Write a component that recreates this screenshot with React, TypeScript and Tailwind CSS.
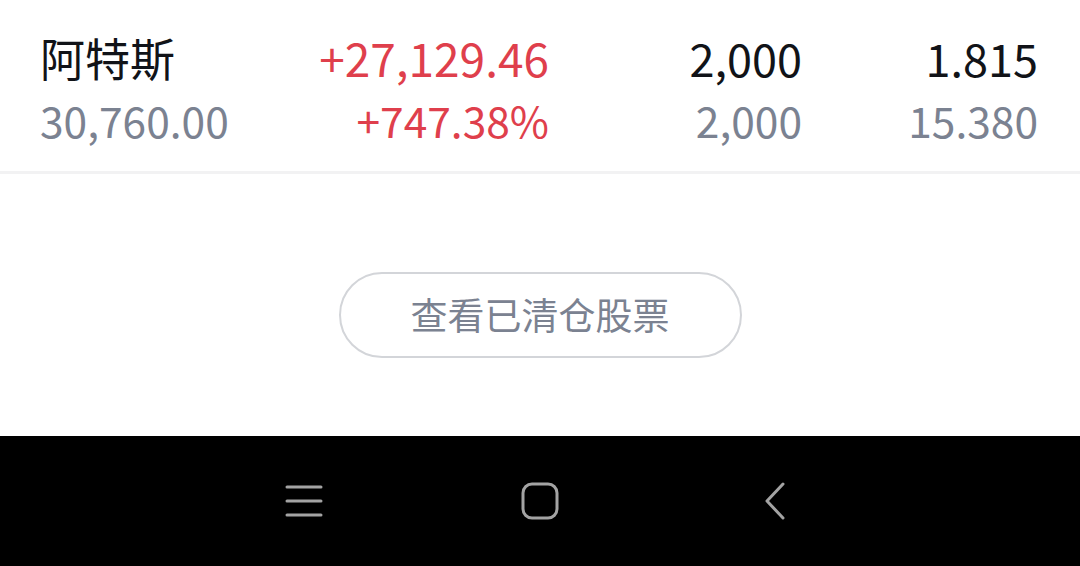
import React from 'react';

const font = { fontFamily: '"Noto Sans CJK SC", "Noto Sans", sans-serif' };

const NavBar: React.FC = () => (
  <div className="grid h-[130px] grid-cols-[236px_236px_236px] items-center justify-center justify-items-center bg-black">
    <svg width="40" height="34" viewBox="0 0 40 34" fill="none" stroke="#a3a3a3" strokeWidth="3" strokeLinecap="round">
      <path d="M3 3h34M3 17h34M3 31h34" />
    </svg>
    <svg width="40" height="40" viewBox="0 0 40 40" fill="none" stroke="#a3a3a3" strokeWidth="3">
      <rect x="3" y="3" width="34" height="34" rx="9" />
    </svg>
    <svg width="26" height="40" viewBox="0 0 26 40" fill="none" stroke="#a3a3a3" strokeWidth="3" strokeLinecap="round" strokeLinejoin="round">
      <path d="M20 3L4 20l16 17" />
    </svg>
  </div>
);

export default function App() {
  return (
    <div className="flex h-[566px] w-[1080px] flex-col bg-white" style={font}>
      <div className="grid grid-cols-[1fr_250px_253px_236px] items-baseline pl-[40px] pr-[42px] pt-[26px] pb-[20px] leading-[62px] text-[#111318]">
        <div className="text-[45px]">阿特斯</div>
        <div className="text-right text-[46px] text-[#df3f4c]">+27,129.46</div>
        <div className="text-right text-[45px]">2,000</div>
        <div className="text-right text-[45px]">1.815</div>
        <div className="text-[42.5px] text-[#7b8291]">30,760.00</div>
        <div className="text-right text-[42.5px] text-[#df3f4c]">+747.38%</div>
        <div className="text-right text-[42.5px] text-[#7b8291]">2,000</div>
        <div className="text-right text-[42.5px] text-[#7b8291]">15.380</div>
      </div>
      <div className="h-[3px] bg-[#f2f2f3]" />
      <div className="flex flex-1 items-start justify-center pt-[98px]">
        <button className="flex h-[86px] w-[403px] items-center justify-center rounded-full border-2 border-[#d3d5d9] text-[37px] text-[#7b8291]">
          查看已清仓股票
        </button>
      </div>
      <NavBar />
    </div>
  );
}
